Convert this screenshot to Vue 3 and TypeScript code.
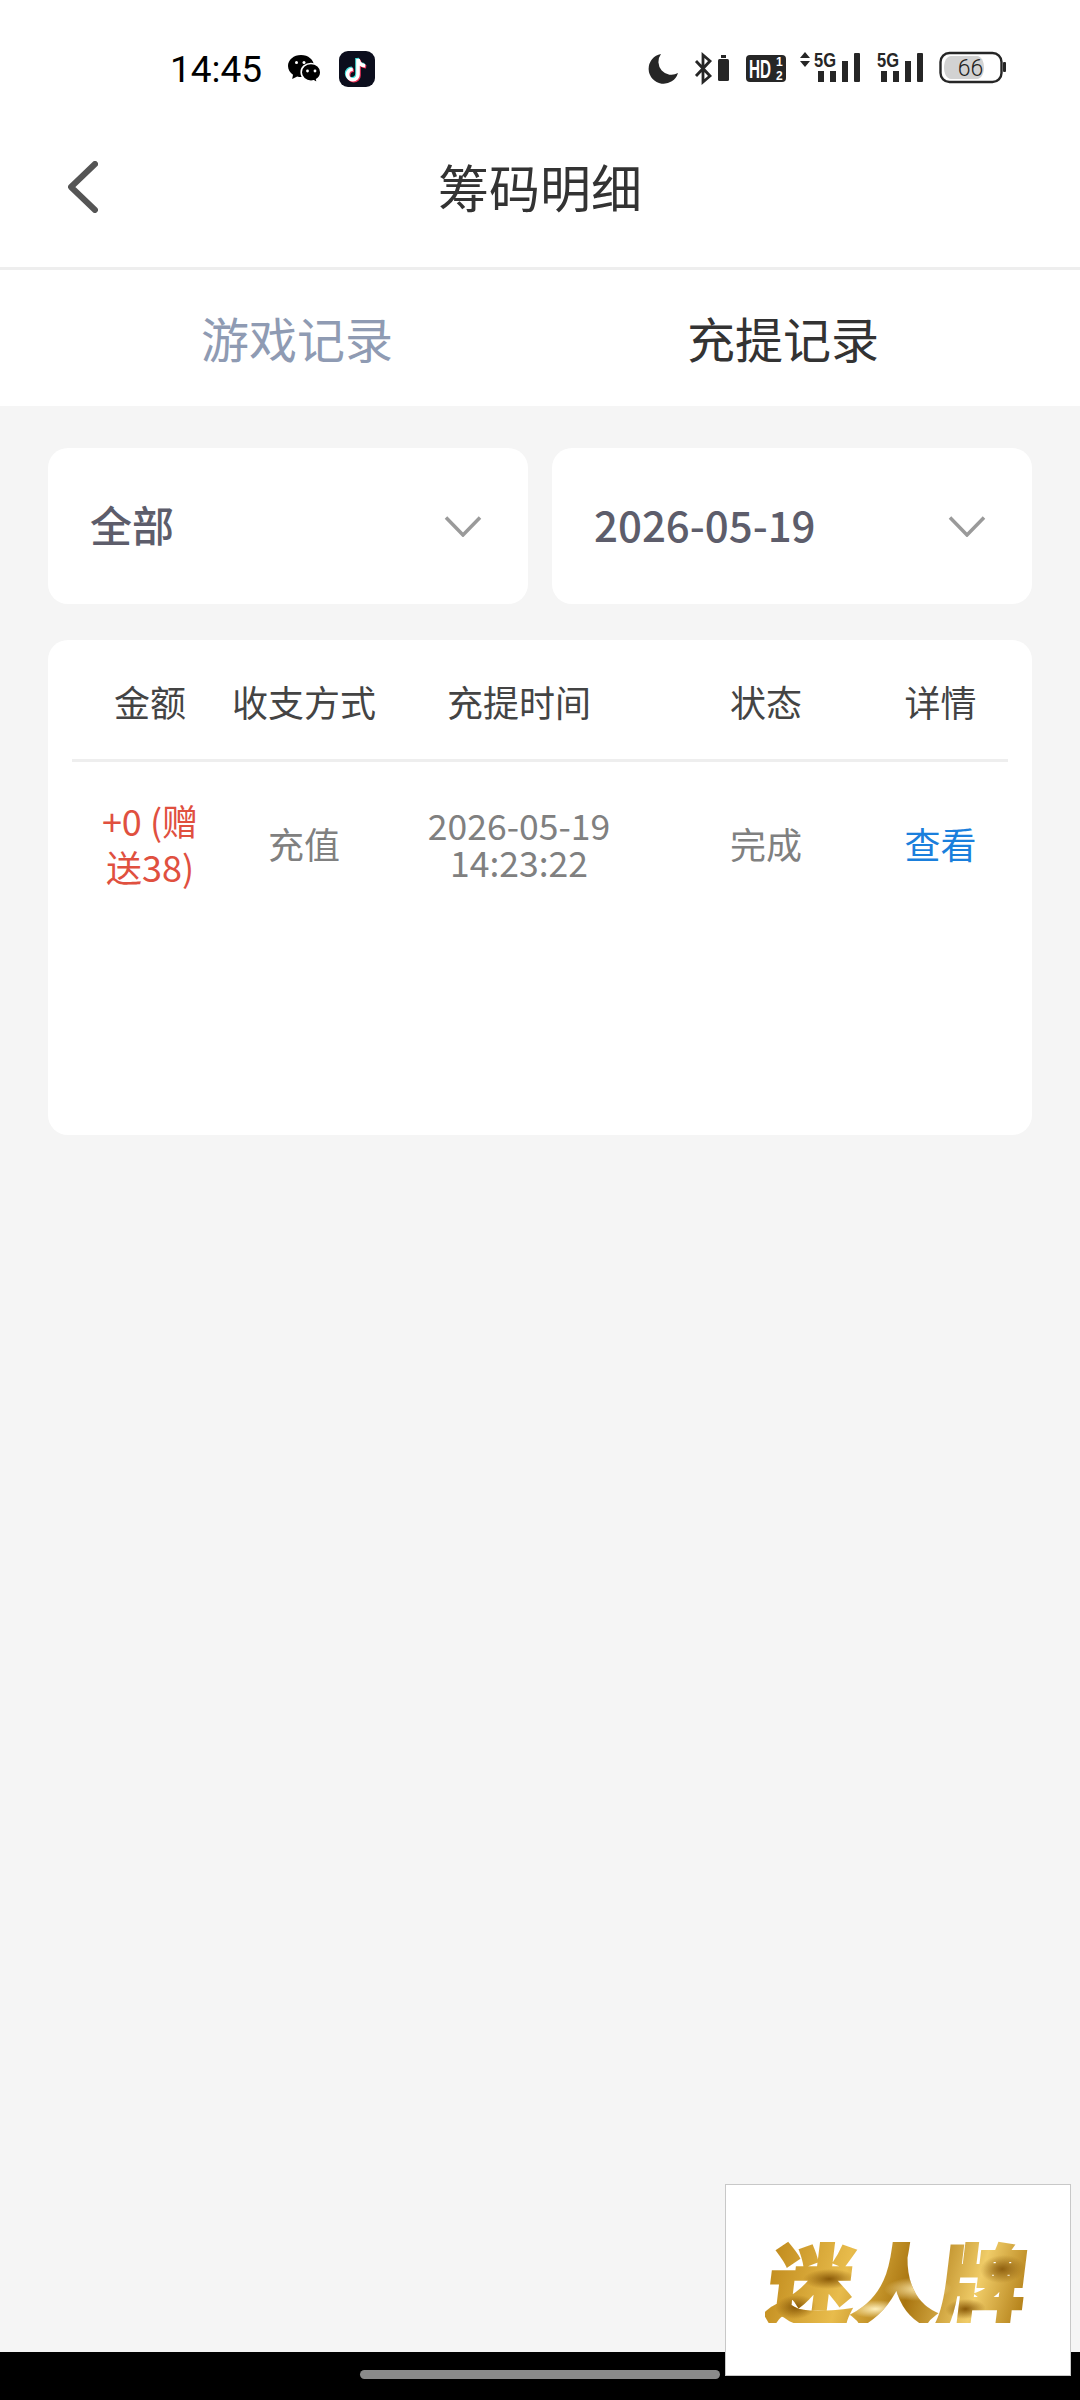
<template>
  <div class="page">
    <header class="status-bar">
      <span class="clock">14:45</span>
      <svg class="wechat" width="33" height="29" viewBox="0 0 33 29">
        <path d="M13 0C5.800 0 0 4.900 0 11c0 3.600 2 6.700 5 8.700L4.200 24l5-2.600c1.200.4 2.500.6 3.800.6 7.200 0 13-4.900 13-11S20.200 0 13 0z" fill="#000" />
        <path d="M23 8.500c-5.400 0-9.800 3.700-9.800 8.700s4.400 9 9.800 9c1 0 1.900-.1 2.800-.4l3.700 2.400-.8-3.800c2.500-1.600 4.100-4.300 4.100-7.200 0-5-4.400-8.700-9.800-8.700z" fill="#000" stroke="#fff" stroke-width="1.600" />
        <circle cx="8.500" cy="7.500" r="1.500" fill="#fff" />
        <circle cx="16" cy="7.500" r="1.500" fill="#fff" />
        <circle cx="19.500" cy="16" r="1.400" fill="#fff" />
        <circle cx="27" cy="16" r="1.400" fill="#fff" />
      </svg>
      <svg class="tiktok" width="36" height="36" viewBox="0 0 36 36">
        <rect width="36" height="36" rx="9" fill="#0c0e1d" />
        <g fill="none" stroke-width="3.600">
          <path d="M18 7v15.500a5.200 5.200 0 1 1-5.200-5.200M18 7c.4 3.800 3 6.400 7.200 6.800" stroke="#45e0dc" />
          <path d="M20 9v15.500a5.200 5.200 0 1 1-5.200-5.200M20 9c.4 3.800 3 6.400 7.200 6.800" stroke="#f2325a" />
          <path d="M19 8v15.500a5.200 5.200 0 1 1-5.200-5.200M19 8c.4 3.800 3 6.400 7.200 6.800" stroke="#fff" />
        </g>
      </svg>
      <svg class="sys-icons" width="370" height="40" viewBox="640 50 370 40">
        <!-- moon -->
        <path d="M660 55a15 15 0 1 0 17 19 13 13 0 0 1-17-19z" fill="#262626" />
        <!-- bluetooth -->
        <path d="M695 62l14 15-7 6V56l7 6-14 15" fill="none" stroke="#262626" stroke-width="2.800" />
        <rect x="717" y="60" width="11" height="22" rx="1.500" fill="#262626" />
        <rect x="720" y="56" width="5" height="3" fill="#262626" />
        <!-- HD -->
        <rect x="745" y="56" width="40" height="27" rx="4" fill="#262626" />
        <text x="748" y="79" class="hd" textLength="22" lengthAdjust="spacingAndGlyphs">HD</text>
        <text x="775" y="67" class="hd-small">1</text>
        <text x="775" y="81" class="hd-small">2</text>
        <!-- signal one -->
        <path d="M804 53l5 6h-10zM804 68l5-6h-10z" fill="#262626" />
        <text x="813" y="68" class="five-g" textLength="22" lengthAdjust="spacingAndGlyphs">5G</text>
        <rect x="817" y="72" width="6" height="11" fill="#262626" />
        <rect x="829" y="72" width="6" height="11" fill="#262626" />
        <rect x="841" y="62" width="6" height="21" fill="#262626" />
        <rect x="853" y="54" width="6" height="29" rx="1" fill="#262626" />
        <!-- signal two -->
        <text x="876" y="68" class="five-g" textLength="22" lengthAdjust="spacingAndGlyphs">5G</text>
        <rect x="880" y="72" width="6" height="11" fill="#262626" />
        <rect x="892" y="72" width="6" height="11" fill="#262626" />
        <rect x="904" y="62" width="6" height="21" fill="#262626" />
        <rect x="916" y="54" width="6" height="29" rx="1" fill="#262626" />
        <!-- battery -->
        <rect x="939.500" y="54" width="61" height="29" rx="9" fill="none" stroke="#262626" stroke-width="2.400" />
        <path d="M950 57h26c4 0 7 5 7 11.500S980 80 976 80h-26c-4 0-7-5-7-11.500S946 57 950 57z" fill="#d2d2d2" />
        <rect x="1002" y="63" width="3" height="10" rx="1" fill="#262626" />
        <text x="969.500" y="77" class="batt">66</text>
      </svg>
    </header>

    <nav class="title-bar">
      <svg class="back" width="30" height="52" viewBox="0 0 30 52">
        <path d="M27 3L3 26l24 23" fill="none" stroke="#555" stroke-width="6" stroke-linecap="round" stroke-linejoin="round" />
      </svg>
      <h1 class="title">筹码明细</h1>
    </nav>

    <div class="tabs">
      <div v-for="tab in tabs" :key="tab.label" class="tab" :class="{ active: tab.active }">{{ tab.label }}</div>
    </div>

    <main class="content">
      <div class="filters">
        <div v-for="f in filters" :key="f" class="select">
          <span class="select-label">{{ f }}</span>
          <svg width="38" height="21" viewBox="0 0 38 21">
            <path d="M2 1.500L19 19 36 1.500" fill="none" stroke="#9a9a9a" stroke-width="3.500" />
          </svg>
        </div>
      </div>

      <section class="records">
        <div class="row head">
          <div v-for="h in headers" :key="h">{{ h }}</div>
        </div>
        <div v-for="r in records" :key="r.time" class="row body">
          <div class="amount">{{ r.amount }}</div>
          <div>{{ r.method }}</div>
          <div class="time">{{ r.date }}<br />{{ r.time }}</div>
          <div>{{ r.status }}</div>
          <div class="link">查看</div>
        </div>
      </section>
    </main>

    <footer class="gesture-bar"><span class="pill"></span></footer>

    <div class="brand-ad"><span class="brand">迷人牌</span></div>
  </div>
</template>

<script setup lang="ts">
const tabs = [
  { label: '游戏记录', active: false },
  { label: '充提记录', active: true },
]

const filters = ['全部', '2026-05-19']

const headers = ['金额', '收支方式', '充提时间', '状态', '详情']

const records = [
  { amount: '+0 (赠送38)', method: '充值', date: '2026-05-19', time: '14:23:22', status: '完成' },
]
</script>

<style>
html,
body {
  margin: 0;
  background: #f5f5f5;
}
</style>

<style scoped>
.page {
  position: relative;
  display: flex;
  flex-direction: column;
  min-height: 2400px;
  font-family: 'Noto Sans CJK SC', 'Noto Sans', sans-serif;
  background: #f5f5f5;
}

.status-bar {
  display: flex;
  align-items: center;
  box-sizing: border-box;
  height: 108px;
  padding: 30px 0 0 170px;
  background: #fff;
}

.clock {
  width: 92px;
  font-family: Roboto, sans-serif;
  font-size: 37px;
  color: #000;
}

.wechat {
  margin-left: 26px;
}

.tiktok {
  margin-left: 18px;
}

.sys-icons {
  margin-left: 266px;
}

.hd {
  font: 700 25px 'Liberation Sans', sans-serif;
  fill: #fff;
}

.hd-small {
  font: 700 12px 'Liberation Sans', sans-serif;
  fill: #fff;
}

.five-g {
  font: 700 21px 'Liberation Sans', sans-serif;
  fill: #262626;
}

.batt {
  font: 300 23px Roboto, sans-serif;
  fill: #222;
  text-anchor: middle;
}

.title-bar {
  position: relative;
  display: flex;
  align-items: center;
  justify-content: center;
  height: 159px;
  background: #fff;
  border-bottom: 3px solid #eee;
}

.back {
  position: absolute;
  left: 68px;
  top: 53px;
}

.title {
  margin: 0 0 4px;
  font-size: 51px;
  font-weight: 400;
  color: #333;
}

.tabs {
  display: flex;
  height: 136px;
  padding: 0 54px;
  background: #fff;
}

.tab {
  flex: 1;
  font-size: 48px;
  line-height: 134px;
  color: #8f9bb3;
  text-align: center;
}

.tab.active {
  color: #333;
}

.content {
  display: flex;
  flex: 1;
  flex-direction: column;
  gap: 36px;
  padding: 42px 48px 0;
}

.filters {
  display: grid;
  grid-template-columns: 1fr 1fr;
  gap: 24px;
}

.select {
  display: flex;
  align-items: center;
  justify-content: space-between;
  height: 156px;
  padding: 0 46px 0 42px;
  font-size: 42px;
  font-weight: 500;
  color: #5d5d6b;
  background: #fff;
  border-radius: 20px;
}

.select-label {
  margin-bottom: 6px;
}

.records {
  box-sizing: border-box;
  height: 495px;
  padding: 0 24px;
  background: #fff;
  border-radius: 20px;
}

.row {
  display: grid;
  grid-template-columns: 156px 152px 278px 216px 133px;
  align-items: center;
  text-align: center;
  font-size: 36px;
}

.head {
  height: 122px;
  padding-top: 3px;
  box-sizing: border-box;
  color: #444;
  border-bottom: 3px solid #eee;
}

.body {
  height: 161px;
  color: #808080;
}

.amount {
  padding: 0 20px;
  line-height: 46px;
  color: #e0503f;
}

.time {
  font-size: 35.500px;
  line-height: 37px;
}

.link {
  color: #1a7fdc;
}

.gesture-bar {
  display: flex;
  justify-content: center;
  height: 48px;
  background: #000;
}

.pill {
  width: 360px;
  height: 9px;
  margin-top: 18px;
  background: #8a8a8a;
  border-radius: 5px;
}

.brand-ad {
  position: absolute;
  top: 2184px;
  left: 725px;
  display: flex;
  align-items: center;
  justify-content: center;
  box-sizing: border-box;
  width: 346px;
  height: 192px;
  background: #fff;
  border: 1px solid #c8c8c8;
}

.brand {
  font-size: 86px;
  font-weight: 900;
  line-height: 1;
  color: transparent;
  -webkit-text-stroke: 3px transparent;
  background:
    radial-gradient(ellipse 26px 10px at 60px 42px, #8a5a08 0, transparent 100%),
    radial-gradient(ellipse 34px 12px at 150px 52px, #fbe6a6 0, transparent 100%),
    radial-gradient(ellipse 22px 14px at 232px 32px, #8f6010 0, transparent 100%),
    radial-gradient(ellipse 26px 9px at 110px 72px, #fff0bc 0, transparent 100%),
    radial-gradient(ellipse 20px 12px at 30px 70px, #8a5a08 0, transparent 100%),
    radial-gradient(ellipse 20px 10px at 200px 72px, #8a5a08 0, transparent 100%),
    linear-gradient(100deg, #c08a1c, #e8bc4c 30%, #a8740f 55%, #f0cc68 80%, #b07c14);
  -webkit-background-clip: text;
  background-clip: text;
  transform: skewX(-7deg);
}
</style>
